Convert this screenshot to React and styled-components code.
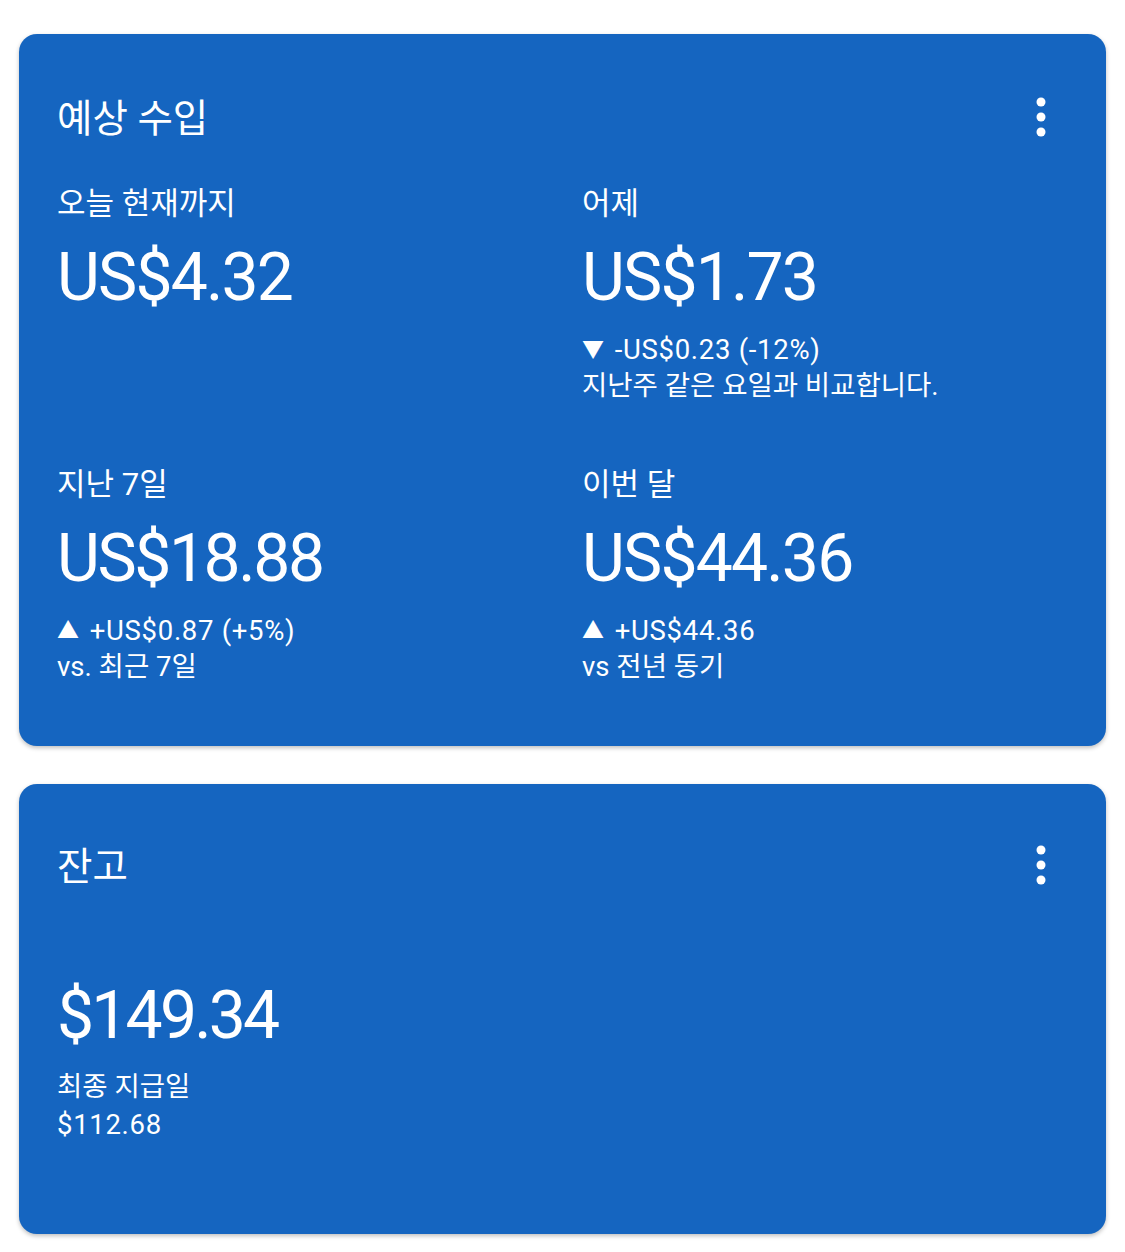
import React from "react";
import styled, { createGlobalStyle } from "styled-components";

const GlobalStyle = createGlobalStyle`
  html, body {
    margin: 0;
    padding: 0;
    background: #fff;
    font-family: Roboto, "Noto Sans CJK KR", sans-serif;
    color: #fff;
  }
`;

const Page = styled.div`
  display: flex;
  flex-direction: column;
  gap: 38px;
  padding: 34px 19px 18px;
`;

const Card = styled.section`
  background: #1565c0;
  border-radius: 18px;
  box-shadow: 0 2px 4px rgba(0, 0, 0, 0.25);
  padding: ${(p) => p.padding};
`;

const Header = styled.div`
  display: flex;
  align-items: center;
  justify-content: space-between;
  height: 44px;
`;

const Title = styled.h2`
  margin: 0;
  font-size: 38.5px;
  font-weight: 400;
  line-height: 44px;
  padding-top: 4px;
`;

const MenuButton = styled.button`
  display: flex;
  align-items: center;
  justify-content: center;
  width: 54px;
  height: 44px;
  padding: 0;
  border: none;
  background: none;
  color: #fff;
`;

const Grid = styled.div`
  display: grid;
  grid-template-columns: 1fr 1fr;
  column-gap: 39px;
  row-gap: 61px;
  margin-top: 45px;
`;

const Stat = styled.div`
  display: flex;
  flex-direction: column;
`;

const Label = styled.div`
  font-size: 31px;
  line-height: 40px;
`;

const Amount = styled.div`
  font-size: 66px;
  line-height: 80px;
  margin-top: ${(p) => p.top || "14px"};
  letter-spacing: ${(p) => p.spacing || "-1.8px"};
`;

const Note = styled.div`
  margin-top: ${(p) => p.top || "14px"};
  font-size: 27.5px;
  line-height: ${(p) => p.lh || "36px"};
`;

const Line = styled.div`
  letter-spacing: ${(p) => (p.latin ? "0.7px" : "0")};
`;

const Arrow = styled.span`
  display: inline-block;
  font-size: 22px;
  margin-right: 10px;
  vertical-align: 2px;
`;

const Dots = () => (
  <svg width="12" height="40" viewBox="0 0 12 40" fill="currentColor">
    <circle cx="6" cy="5" r="4.5" />
    <circle cx="6" cy="20" r="4.5" />
    <circle cx="6" cy="35" r="4.5" />
  </svg>
);

const stats = [
  { label: "오늘 현재까지", amount: "US$4.32" },
  {
    label: "어제",
    amount: "US$1.73",
    dir: "down",
    change: "-US$0.23 (-12%)",
    note: "지난주 같은 요일과 비교합니다.",
  },
  {
    label: "지난 7일",
    amount: "US$18.88",
    spacing: "-2.4px",
    dir: "up",
    change: "+US$0.87 (+5%)",
    note: "vs. 최근 7일",
  },
  {
    label: "이번 달",
    amount: "US$44.36",
    dir: "up",
    change: "+US$44.36",
    note: "vs 전년 동기",
  },
];

export default function App() {
  return (
    <>
      <GlobalStyle />
      <Page>
        <Card padding="61px 38px 61px 38px">
          <Header>
            <Title>예상 수입</Title>
            <MenuButton aria-label="더보기">
              <Dots />
            </MenuButton>
          </Header>
          <Grid>
            {stats.map((s) => (
              <Stat key={s.label}>
                <Label>{s.label}</Label>
                <Amount spacing={s.spacing}>{s.amount}</Amount>
                {s.change && (
                  <Note>
                    <Line latin>
                      <Arrow>{s.dir === "up" ? "▲" : "▼"}</Arrow>
                      {s.change}
                    </Line>
                    <Line>{s.note}</Line>
                  </Note>
                )}
              </Stat>
            ))}
          </Grid>
        </Card>

        <Card padding="59px 38px 90px 38px">
          <Header>
            <Title>잔고</Title>
            <MenuButton aria-label="더보기">
              <Dots />
            </MenuButton>
          </Header>
          <Amount top="89px" spacing="-2.8px">
            $149.34
          </Amount>
          <Note top="12px" lh="38px">
            <Line>최종 지급일</Line>
            <Line latin>$112.68</Line>
          </Note>
        </Card>
      </Page>
    </>
  );
}
